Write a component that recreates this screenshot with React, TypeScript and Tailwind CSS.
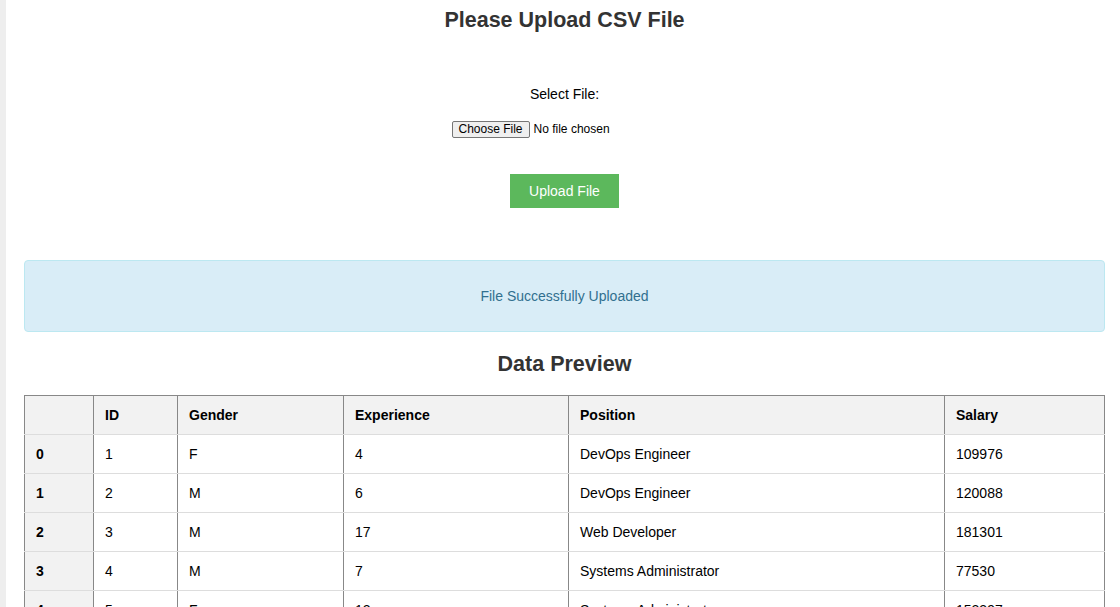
const columns = [
  { key: 'idx', label: '', width: 'w-[69px]' },
  { key: 'id', label: 'ID', width: 'w-[84px]' },
  { key: 'gender', label: 'Gender', width: 'w-[166px]' },
  { key: 'exp', label: 'Experience', width: 'w-[225px]' },
  { key: 'pos', label: 'Position', width: 'w-[376px]' },
  { key: 'salary', label: 'Salary', width: '' },
];

const rows = [
  ['0', '1', 'F', '4', 'DevOps Engineer', '109976'],
  ['1', '2', 'M', '6', 'DevOps Engineer', '120088'],
  ['2', '3', 'M', '17', 'Web Developer', '181301'],
  ['3', '4', 'M', '7', 'Systems Administrator', '77530'],
  ['4', '5', 'F', '12', 'Systems Administrator', '152397'],
];

function UploadForm() {
  return (
    <section className="flex flex-col items-center">
      <h2 className="mt-[8px] text-[21.5px] font-bold leading-[24px] text-[#333]">Please Upload CSV File</h2>
      <label className="mt-[54px] text-[14px] leading-[16px] text-black">Select File:</label>
      <div className="mt-[18px] flex h-[18px] w-[226px] items-center text-[12px] leading-[14px] text-black">
        <span className="flex h-[17px] items-center rounded-[2px] border border-[#767676] bg-[#efefef] px-[6px]">
          Choose File
        </span>
        <span className="ml-[4px]">No file chosen</span>
      </div>
      <button className="mt-[36px] h-[34px] w-[109px] bg-[#5cb85c] text-[14px] text-white">Upload File</button>
    </section>
  );
}

function DataTable() {
  return (
    <table className="w-full table-fixed border-collapse border border-[#888] text-[14px] text-black">
      <thead>
        <tr className="h-[39px] bg-[#f2f2f2]">
          {columns.map((c) => (
            <th
              key={c.key}
              className={`${c.width} border-x border-b border-x-[#888] border-b-[#ddd] px-[11px] text-left font-bold`}
            >
              {c.label}
            </th>
          ))}
        </tr>
      </thead>
      <tbody>
        {rows.map((r) => (
          <tr key={r[0]} className="h-[39px]">
            {r.map((v, i) => (
              <td
                key={i}
                className={`border-x border-b border-x-[#888] border-b-[#ddd] px-[11px] ${
                  i === 0 ? 'bg-[#f2f2f2] font-bold' : ''
                }`}
              >
                {v}
              </td>
            ))}
          </tr>
        ))}
      </tbody>
    </table>
  );
}

export default function App() {
  return (
    <div className="flex h-[607px] overflow-hidden bg-white font-['Liberation_Sans',Arial,sans-serif]">
      <div className="w-[6px] shrink-0 bg-[#eeeeee]" />
      <main className="min-w-0 flex-1 pl-[18px] pr-[15px]">
        <UploadForm />
        <div className="mt-[52px] flex h-[72px] items-center justify-center rounded-[4px] border border-[#bce8f1] bg-[#d9edf7] text-[14px] text-[#31708f]">
          File Successfully Uploaded
        </div>
        <h2 className="mt-[20px] text-center text-[21.5px] font-bold leading-[24px] text-[#333]">Data Preview</h2>
        <div className="mt-[19px]">
          <DataTable />
        </div>
      </main>
    </div>
  );
}
